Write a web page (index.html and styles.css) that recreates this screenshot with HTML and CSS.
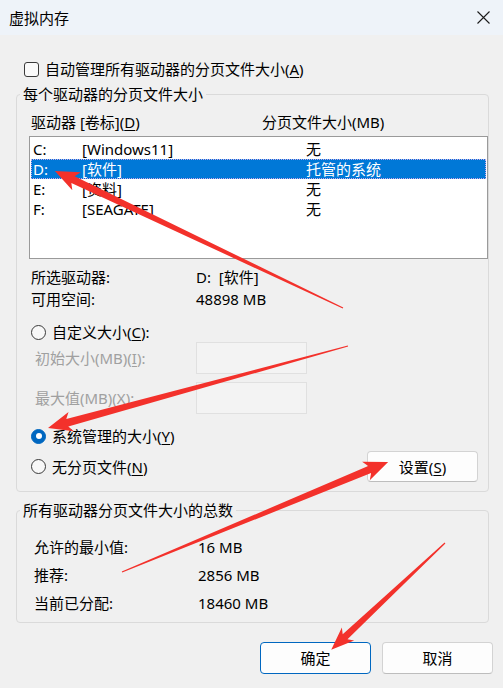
FILE: index.html
```html
<!DOCTYPE html>
<html>
<head>
  <meta charset="utf-8">
  <title>虚拟内存</title>
  <link rel="stylesheet" href="styles.css">
</head>
<body>
  <div id="title-bar">
    <span id="title">虚拟内存</span>
    <svg class="close" width="13" height="13" viewBox="0 0 13 13"><path d="M0.5 0.5L12.5 12.5M12.5 0.5L0.5 12.5" stroke="#1b1b1b" stroke-width="1.1" fill="none"/></svg>
  </div>

  <div id="content">
    <div class="check-row"><span class="checkbox"></span><span>自动管理所有驱动器的分页文件大小(<u>A</u>)</span></div>

    <fieldset class="group" id="per-drive">
      <legend>每个驱动器的分页文件大小</legend>
      <div class="group-body">
        <div class="list-head">
          <span class="head-drive">驱动器 [卷标](<u>D</u>)</span>
          <span>分页文件大小(MB)</span>
        </div>
        <div id="drives">
          <div class="drive"><span class="letter">C:</span><span class="label">[Windows11]</span><span>无</span></div>
          <div class="drive selected"><span class="letter">D:</span><span class="label">[软件]</span><span>托管的系统</span></div>
          <div class="drive"><span class="letter">E:</span><span class="label">[资料]</span><span>无</span></div>
          <div class="drive"><span class="letter">F:</span><span class="label">[SEAGATE]</span><span>无</span></div>
        </div>

        <div class="info">
          <div class="info-row"><span class="info-key">所选驱动器:</span><span>D:&nbsp; [软件]</span></div>
          <div class="info-row"><span class="info-key">可用空间:</span><span>48898 MB</span></div>
        </div>

        <div class="radio-row first"><span class="radio"></span><span>自定义大小(<u>C</u>):</span></div>
        <div class="size-row"><span class="size-key">初始大小(MB)(<u>I</u>):</span><span class="size-box"></span></div>
        <div class="size-row second"><span class="size-key">最大值(MB)(<u>X</u>):</span><span class="size-box"></span></div>
        <div class="radio-row checked-row"><span class="radio on"></span><span>系统管理的大小(<u>Y</u>)</span></div>
        <div class="last-row">
          <div class="radio-row"><span class="radio"></span><span>无分页文件(<u>N</u>)</span></div>
          <div class="btn set-btn"><span>设置(<u>S</u>)</span></div>
        </div>
      </div>
    </fieldset>

    <fieldset class="group" id="totals">
      <legend>所有驱动器分页文件大小的总数</legend>
      <div class="group-body totals-body">
        <div class="total-row"><span class="total-key">允许的最小值:</span><span>16 MB</span></div>
        <div class="total-row"><span class="total-key">推荐:</span><span>2856 MB</span></div>
        <div class="total-row"><span class="total-key">当前已分配:</span><span>18460 MB</span></div>
      </div>
    </fieldset>

    <div class="buttons">
      <div class="btn default">确定</div>
      <div class="btn">取消</div>
    </div>
  </div>

  <!-- red marks drawn over the dialog -->
  <svg class="marks" width="503" height="688" viewBox="0 0 503 688">
    <g fill="#f3312b">
      <polygon transform="translate(343 308) rotate(205.44)" points="0,-0.6 299,-3.8 295,-10 319,0 295,10 299,3.8 0,0.6"/>
      <polygon transform="translate(348 346) rotate(164.71)" points="0,-0.6 291,-3.8 287,-10 311,0 287,10 291,3.8 0,0.6"/>
      <polygon transform="translate(122 572) rotate(-22.47)" points="0,-0.6 268,-3.8 264,-10 288,0 264,10 268,3.8 0,0.6"/>
      <polygon transform="translate(445 543) rotate(136.82)" points="0,-0.6 137,-3.5 133,-9 156,0 133,9 137,3.5 0,0.6"/>
    </g>
  </svg>
</body>
</html>
```

FILE: styles.css
```css
html, body {
  margin: 0;
  padding: 0;
}
body {
  position: relative;
  width: 503px;
  height: 688px;
  overflow: hidden;
  background: #f0f0f0;
  color: #000;
  font-family: "Noto Sans", "Noto Sans CJK SC", sans-serif;
  font-size: 15px;
  line-height: 20px;
}
u {
  text-underline-offset: 2px;
}

#title-bar {
  height: 35px;
  box-sizing: border-box;
  display: flex;
  align-items: center;
  justify-content: space-between;
  padding: 0 13px 0 9px;
  background: #eef3f9;
}
#title {
  font-size: 15px;
}
.close {
  display: block;
}

#content {
  padding: 24px 14px 0 16px;
}

.check-row {
  display: flex;
  align-items: center;
  gap: 6px;
  margin-left: 8px;
}
.checkbox {
  width: 15px;
  height: 15px;
  box-sizing: border-box;
  border: 1px solid #3a3a3a;
  border-radius: 3px;
  background: #fafafa;
}

.group {
  margin: 5px 0 0 0;
  padding: 0;
  min-width: 0;
  border: 1px solid #dadada;
  border-radius: 4px;
}
.group legend {
  margin-left: 3px;
  padding: 0 3px;
  line-height: 20px;
}
.group-body {
  padding: 8px 0 9px 12px;
}

.list-head {
  display: flex;
  padding-left: 2px;
}
.head-drive {
  width: 231px;
}

#drives {
  margin-top: 4px;
  height: 123px;
  box-sizing: border-box;
  padding: 2px 1px;
  border: 1px solid #9a9a9a;
  background: #fff;
}
.drive {
  display: flex;
  height: 20px;
  padding-left: 2px;
}
.drive.selected {
  background: #0078d7;
  color: #fff;
  outline: 1px dotted #c8a8e8;
  outline-offset: -1px;
}
.letter {
  width: 49px;
}
.label {
  width: 224px;
}

.info {
  margin-top: 7px;
}
.info-row {
  display: flex;
  line-height: 22px;
  padding-left: 2px;
}
.info-key {
  width: 165px;
}

.radio-row {
  display: flex;
  align-items: center;
  gap: 6px;
  padding-left: 2px;
}
.radio-row.first {
  margin-top: 12px;
}
.radio-row.checked-row {
  margin-top: 12px;
}
.radio {
  width: 15px;
  height: 15px;
  box-sizing: border-box;
  border: 1px solid #3a3a3a;
  border-radius: 50%;
  background: #f8f8f8;
}
.radio.on {
  display: grid;
  place-items: center;
  border-color: #0067c0;
  background: #0067c0;
}
.radio.on::after {
  content: "";
  width: 6px;
  height: 6px;
  border-radius: 50%;
  background: #fff;
}

.size-row {
  display: flex;
  align-items: center;
  height: 32px;
  padding-left: 6px;
  color: #a0a0a0;
}
.size-row.second {
  margin-top: 8px;
}
.size-key {
  width: 161px;
}
.size-box {
  width: 111px;
  height: 32px;
  box-sizing: border-box;
  border: 1px solid #e0e0e0;
  background: #f3f3f3;
}

.last-row {
  display: flex;
  align-items: center;
  justify-content: space-between;
  margin-top: 5px;
}

.btn {
  display: flex;
  align-items: center;
  justify-content: center;
  box-sizing: border-box;
  width: 111px;
  height: 32px;
  border: 1px solid #d3d3d3;
  border-bottom-color: #bdbdbd;
  border-radius: 4px;
  background: #fdfdfd;
}
.set-btn {
  height: 31px;
  margin-right: 10px;
}
.btn.default {
  border-color: #0067c0;
}

#totals {
  margin-top: 8px;
}
.totals-body {
  padding: 13px 0 5px 17px;
}
.total-row {
  display: flex;
  align-items: center;
  height: 28px;
}
.total-key {
  width: 164px;
}

.buttons {
  display: flex;
  justify-content: flex-end;
  gap: 11px;
  margin: 19px -4px 0 0;
}

.marks {
  position: absolute;
  top: 0;
  left: 0;
  pointer-events: none;
}
```
